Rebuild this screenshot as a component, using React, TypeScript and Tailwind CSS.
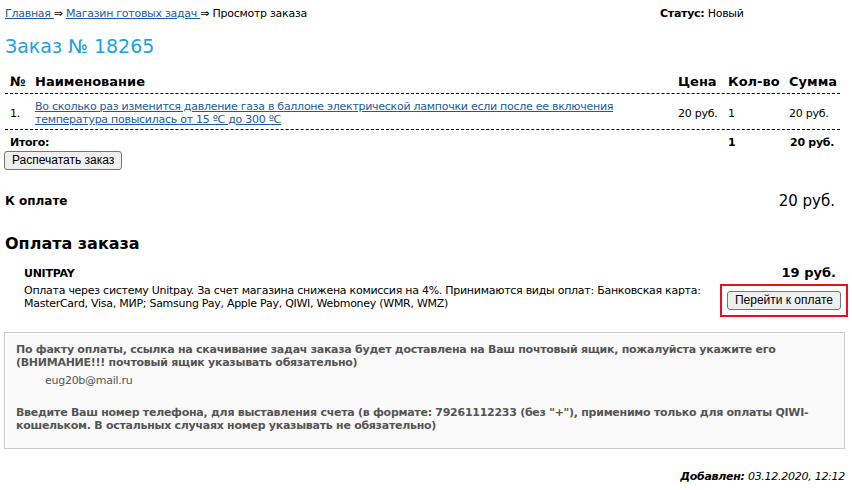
import React from "react";

const font = { fontFamily: '"DejaVu Sans", Verdana, sans-serif' };

function Btn({ children }: { children: React.ReactNode }) {
  return (
    <button className="h-[19px] whitespace-nowrap rounded-[3px] border border-[#767676] bg-[#efefef] px-[7px] text-[12px] leading-[15px] tracking-normal text-black font-['Liberation_Sans',Arial,sans-serif]">
      {children}
    </button>
  );
}

export default function App() {
  return (
    <div className="min-h-[490px] bg-white px-[4px] text-[11px] tracking-[-0.27px] text-black" style={font}>
      {/* breadcrumbs + status */}
      <div className="flex pt-[7px] pl-px leading-[14px] whitespace-nowrap">
        <div className="w-[655px]">
          <a href="#" className="text-[#1a5c9c] underline">Главная </a>
          <span> ⇒ </span>
          <a href="#" className="text-[#1a5c9c] underline">Магазин готовых задач </a>
          <span> ⇒ Просмотр заказа</span>
        </div>
        <div>
          <b>Статус:</b> Новый
        </div>
      </div>

      <h1 className="mt-[13px] pl-px text-[19px] leading-[24px] font-normal tracking-normal text-[#1ba1e2]">Заказ № 18265</h1>

      {/* order table */}
      <div className="mt-[16px] ml-px w-[835px] whitespace-nowrap">
        <div className="flex border-b border-dashed border-black pb-[3px] text-[13px] leading-[16px] font-bold tracking-normal">
          <div className="w-[30px] pl-[5px]">№</div>
          <div className="flex-1">Наименование</div>
          <div className="w-[50px]">Цена</div>
          <div className="w-[61px]">Кол-во</div>
          <div className="w-[51px]">Сумма</div>
        </div>
        <div className="flex items-center border-b border-dashed border-black pt-[6px] pb-[3px] leading-[13px]">
          <div className="w-[30px] pl-[5px]">1.</div>
          <div className="flex-1">
            <a href="#" className="text-[#1a5c9c] underline">
              Во сколько раз изменится давление газа в баллоне электрической лампочки если после ее включения
              <br />
              температура повысилась от 15 ºС до 300 ºС
            </a>
          </div>
          <div className="w-[50px]">20 руб.</div>
          <div className="w-[61px]">1</div>
          <div className="w-[51px]">20 руб.</div>
        </div>
        <div className="flex pt-[6px] leading-[13px] font-bold">
          <div className="flex-1 pl-[5px]">Итого:</div>
          <div className="w-[61px]">1</div>
          <div className="w-[51px] pl-px">20 руб.</div>
        </div>
      </div>

      <div className="mt-[2px]">
        <Btn>Распечатать заказ</Btn>
      </div>

      {/* to pay */}
      <div className="mt-[21px] flex items-center justify-between pl-px pr-[13px] tracking-normal">
        <div className="text-[12px] leading-[16px] font-bold">К оплате</div>
        <div className="text-[15px] leading-[20px]">20 руб.</div>
      </div>

      <h2 className="mt-[23px] pl-px text-[16px] leading-[20px] font-bold tracking-normal">Оплата заказа</h2>

      {/* payment method */}
      <div className="mt-[11px] pl-[20px]">
        <div className="flex items-end justify-between pr-[12px]">
          <div className="font-bold leading-[14px]">UNITPAY</div>
          <div className="text-[13px] leading-[16px] font-bold tracking-normal">19 руб.</div>
        </div>
        <div className="mt-[3px] flex items-start justify-between">
          <div className="whitespace-nowrap leading-[13px]">
            Оплата через систему Unitpay. За счет магазина снижена комиссия на 4%. Принимаются виды оплат: Банковская карта:
            <br />
            MasterCard, Visa, МИР; Samsung Pay, Apple Pay, QIWI, Webmoney (WMR, WMZ)
          </div>
          <div className="shrink-0 border-2 border-[#e8101e] px-[5px] py-[5px]">
            <Btn>Перейти к оплате</Btn>
          </div>
        </div>
      </div>

      {/* info box */}
      <div className="mt-[15px] mr-[3px] whitespace-nowrap border border-[#cccccc] bg-[#fafafa] px-[11px] pt-[10px] pb-[16px] text-[#555555]">
        <div className="font-bold leading-[13px]">
          По факту оплаты, ссылка на скачивание задач заказа будет доставлена на Ваш почтовый ящик, пожалуйста укажите его
          <br />
          (ВНИМАНИЕ!!! почтовый ящик указывать обязательно)
        </div>
        <div className="mt-[5px] pl-[29px] leading-[14px]">eug20b@mail.ru</div>
        <div className="mt-[18px] font-bold leading-[13px]">
          Введите Ваш номер телефона, для выставления счета (в формате: 79261112233 (без "+"), применимо только для оплаты QIWI-
          <br />
          кошельком. В остальных случаях номер указывать не обязательно)
        </div>
      </div>

      <div className="mt-[21px] pr-[3px] text-right italic leading-[14px]">
        <b>Добавлен:</b> 03.12.2020, 12:12
      </div>
    </div>
  );
}
